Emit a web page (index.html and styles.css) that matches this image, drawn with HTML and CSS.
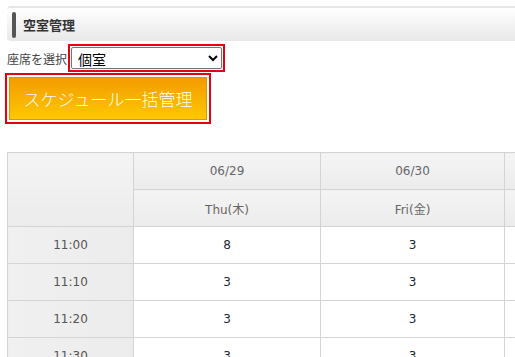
FILE: index.html
```html
<html>
<head>
    <title>空室管理</title>
    <link rel="stylesheet" href="styles.css">
</head>
<body>
    <div class="page">
        <h2 class="section-title"><span class="title-mark"></span>空室管理</h2>

        <form class="seat-form">
            <label for="seatType">座席を選択</label>
            <span class="outline">
                <select id="seatType" name="seatType">
                    <option>個室</option>
                    <option>カウンター</option>
                </select>
            </span>
        </form>

        <div class="outline button-outline">
            <button type="button" class="schedule-button">スケジュール一括管理</button>
        </div>

        <table class="vacancy-table">
            <colgroup>
                <col class="col-time">
                <col class="col-first">
                <col class="col-day">
                <col class="col-day">
            </colgroup>
            <thead>
                <tr>
                    <th class="time-head" rowspan="2"></th>
                    <th>06/29</th>
                    <th>06/30</th>
                    <th>07/01</th>
                </tr>
                <tr>
                    <th>Thu(木)</th>
                    <th>Fri(金)</th>
                    <th>Sat(土)</th>
                </tr>
            </thead>
            <tbody>
                <tr><th class="time">11:00</th><td>8</td><td>3</td><td>3</td></tr>
                <tr><th class="time">11:10</th><td>3</td><td>3</td><td>3</td></tr>
                <tr><th class="time">11:20</th><td>3</td><td>3</td><td>3</td></tr>
                <tr><th class="time">11:30</th><td>3</td><td>3</td><td>3</td></tr>
            </tbody>
        </table>
    </div>
</body>
</html>
```

FILE: styles.css
```css
body {
    margin: 0;
    font-family: "DejaVu Sans", "Noto Sans CJK JP", sans-serif;
    color: #333;
    overflow: hidden;
}

.page {
    width: 760px;
    padding: 6px 0 0 7px;
}

.section-title {
    display: flex;
    align-items: center;
    height: 33px;
    margin: 0;
    padding-left: 5px;
    border-top: 2px solid #e6e6e6;
    border-radius: 4px 0 0 4px;
    background: linear-gradient(#ffffff, #e8e8e8);
    font-family: "Noto Sans CJK JP", sans-serif;
    font-size: 13px;
    font-weight: bold;
    color: #333;
}

.title-mark {
    width: 4px;
    height: 26px;
    margin-right: 7px;
    border-radius: 2px;
    background-color: #555;
}

.seat-form {
    display: flex;
    align-items: center;
    margin: 3px 0 0 0;
}

.seat-form label {
    font-family: "Noto Sans CJK JP", sans-serif;
    font-size: 12px;
    color: #444;
    margin-right: 1px;
}

.outline {
    display: inline-block;
    border: 2px solid #e60012;
    padding: 1px;
}

.outline select {
    display: block;
    width: 151px;
    height: 22px;
    margin: 0;
    padding: 0 2px;
    border: 1px solid #767676;
    border-radius: 2px;
    background-color: #fff;
    font-family: "Noto Sans CJK JP", sans-serif;
    font-size: 14px;
    color: #000;
}

.button-outline {
    margin: 1px 0 0 -2px;
    padding: 2px;
}

.schedule-button {
    display: block;
    width: 198px;
    height: 43px;
    border: 1px solid #d89a00;
    background: linear-gradient(#f29c00, #ffc800);
    font-family: "Noto Sans CJK JP", sans-serif;
    font-size: 17px;
    font-weight: 300;
    color: #fff;
    cursor: pointer;
}

.vacancy-table {
    width: 681px;
    margin-top: 28px;
    border-collapse: collapse;
    table-layout: fixed;
    font-size: 12px;
}

.col-time {
    width: 126px;
}

.col-first {
    width: 187px;
}

.col-day {
    width: 184px;
}

.vacancy-table th,
.vacancy-table td {
    padding: 0;
    border: 1px solid #d4d4d4;
    text-align: center;
    font-weight: normal;
}

.vacancy-table thead th {
    height: 37px;
    background: linear-gradient(#f4f4f4, #ececec);
    color: #666;
}

.vacancy-table thead .time-head {
    height: auto;
}

.vacancy-table tbody th,
.vacancy-table tbody td {
    height: 37px;
}

.vacancy-table .time {
    background: linear-gradient(to right, #f0f0f0, #ececec);
    color: #555;
}

.vacancy-table td {
    background-color: #fff;
    color: #1a2a3a;
}
```
